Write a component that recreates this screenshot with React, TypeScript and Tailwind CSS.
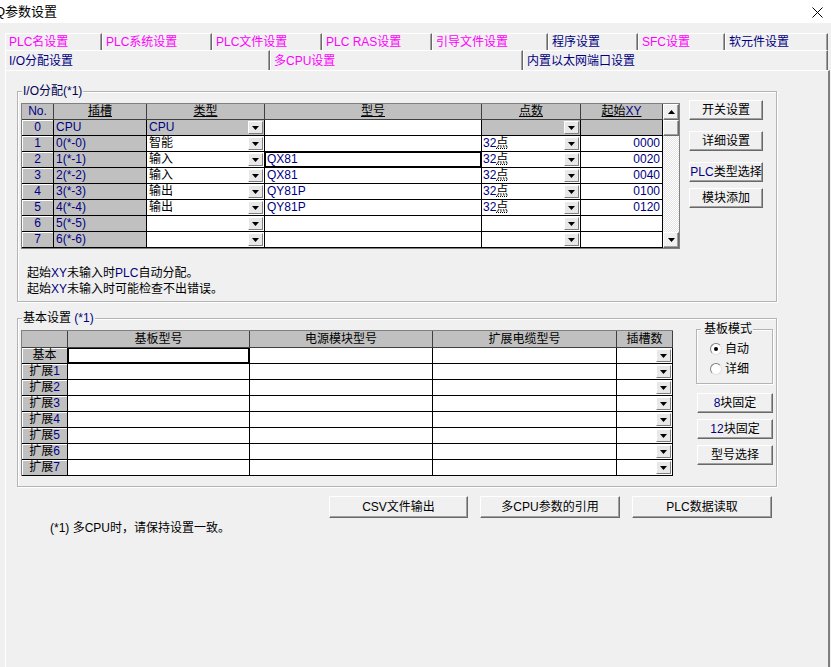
import type { ReactNode } from 'react'

type IoRow = {
  no: string
  slot: string
  type: string
  model: string
  points: string
  xy: string
  cpu?: boolean
  focus?: boolean
}

const ioRows: IoRow[] = [
  { no: '0', slot: 'CPU', type: 'CPU', model: '', points: '', xy: '', cpu: true },
  { no: '1', slot: '0(*-0)', type: '智能', model: '', points: '32点', xy: '0000' },
  { no: '2', slot: '1(*-1)', type: '输入', model: 'QX81', points: '32点', xy: '0020', focus: true },
  { no: '3', slot: '2(*-2)', type: '输入', model: 'QX81', points: '32点', xy: '0040' },
  { no: '4', slot: '3(*-3)', type: '输出', model: 'QY81P', points: '32点', xy: '0100' },
  { no: '5', slot: '4(*-4)', type: '输出', model: 'QY81P', points: '32点', xy: '0120' },
  { no: '6', slot: '5(*-5)', type: '', model: '', points: '', xy: '' },
  { no: '7', slot: '6(*-6)', type: '', model: '', points: '', xy: '' },
]

const baseRows = ['', '1', '2', '3', '4', '5', '6', '7']

const raised =
  'bg-[#f0f0f0] border border-t-white border-l-white border-r-[#696969] border-b-[#696969] shadow-[inset_-1px_-1px_0_#a0a0a0]'

function DropBtn() {
  return (
    <span className="mr-[1px] flex h-[13px] w-[15px] shrink-0 items-center justify-center border border-t-white border-l-white border-r-[#808080] border-b-[#808080] bg-[#e8e8e8]">
      <svg width="7" height="4" viewBox="0 0 7 4">
        <path d="M0 0h7L3.5 4z" fill="#000" />
      </svg>
    </span>
  )
}

function Button({ children, className = '' }: { children: ReactNode; className?: string }) {
  return (
    <div className={`flex items-center justify-center ${raised} ${className}`}>{children}</div>
  )
}

function Group({ label, className = '', children }: { label: ReactNode; className?: string; children: ReactNode }) {
  return (
    <div
      className={`relative border border-[#b4b4b4] shadow-[1px_1px_0_#fff,inset_1px_1px_0_#fff] ${className}`}
    >
      <span className="absolute -top-[9px] left-[4px] bg-[#f0f0f0] px-[1px] leading-[16px]">{label}</span>
      {children}
    </div>
  )
}

function Radio({ checked, label }: { checked?: boolean; label: string }) {
  return (
    <div className="flex h-[16px] items-center">
      <span className="flex h-[12px] w-[12px] items-center justify-center rounded-full border border-t-[#808080] border-l-[#808080] border-r-[#e0e0e0] border-b-[#e0e0e0] bg-white">
        {checked && <span className="h-[4px] w-[4px] rounded-full bg-black" />}
      </span>
      <span className="ml-[3px]">{label}</span>
    </div>
  )
}

function Tab({ children, className = '', navy }: { children: ReactNode; className?: string; navy?: boolean }) {
  return (
    <div
      className={`flex items-center border-t border-l border-t-white border-l-white border-r border-r-[#696969] pl-[3px] shadow-[inset_-1px_0_0_#a0a0a0] ${
        navy ? 'text-[#000080]' : 'text-[#ff00ff]'
      } ${className}`}
    >
      {children}
    </div>
  )
}

function IoTable() {
  return (
    <div className="flex border-t border-l border-b border-[#808080]">
      <div className="flex flex-col">
        <div className="flex h-[16px] bg-[#c0c0c0] text-[#000080]">
          <div className="w-[32px] border-r border-b border-[#404040] text-center leading-[15px]">No.</div>
          <div className="w-[93px] border-r border-b border-[#404040] text-center leading-[15px] text-black">
            <span className="underline underline-offset-1">插槽</span>
          </div>
          <div className="w-[118px] border-r border-b border-[#404040] text-center leading-[15px] text-black">
            <span className="underline underline-offset-1">类型</span>
          </div>
          <div className="w-[217px] border-r border-b border-[#404040] text-center leading-[15px] text-black">
            <span className="underline underline-offset-1">型号</span>
          </div>
          <div className="w-[99px] border-r border-b border-[#404040] text-center leading-[15px] text-black">
            <span className="underline underline-offset-1">点数</span>
          </div>
          <div className="w-[82px] border-r border-b border-[#404040] text-center leading-[15px] text-black">
            <span className="underline underline-offset-1">
              起始<span className="text-[#000080]">XY</span>
            </span>
          </div>
        </div>
        {ioRows.map((r) => (
          <div key={r.no} className="flex h-[16px] leading-[15px]">
            <div className="w-[32px] border-r border-b border-black bg-[#c0c0c0] text-center text-[#000080] shadow-[inset_1px_1px_0_#fff]">
              {r.no}
            </div>
            <div className="w-[93px] border-r border-b border-black bg-[#c0c0c0] pl-[2px] text-[#000080]">{r.slot}</div>
            <div
              className={`flex w-[118px] items-center justify-between border-r border-b border-black pl-[2px] ${
                r.cpu ? 'bg-[#c0c0c0] text-[#000080]' : 'bg-white'
              }`}
            >
              <span>{r.type}</span>
              <DropBtn />
            </div>
            <div
              className={`w-[217px] border-r border-b border-black bg-white pl-[2px] text-[#000080] ${
                r.focus ? 'shadow-[inset_0_0_0_1px_#000]' : ''
              }`}
            >
              {r.model}
            </div>
            <div
              className={`flex w-[99px] items-center justify-between border-r border-b border-black pl-[1px] text-[#000080] ${
                r.cpu ? 'bg-[#c0c0c0]' : 'bg-white'
              }`}
            >
              <span>
                {r.points && (
                  <>
                    32<span className="text-black underline decoration-dotted">点</span>
                  </>
                )}
              </span>
              <DropBtn />
            </div>
            <div
              className={`w-[82px] border-r border-b border-black pr-[2px] text-right text-[#000080] ${
                r.cpu ? 'bg-[#c0c0c0]' : 'bg-white'
              }`}
            >
              {r.xy}
            </div>
          </div>
        ))}
      </div>
      <div className="flex w-[17px] flex-col border-r border-[#808080]">
        <div className={`flex h-[16px] items-center justify-center ${raised}`}>
          <svg width="7" height="4" viewBox="0 0 7 4">
            <path d="M0 4h7L3.5 0z" fill="#000" />
          </svg>
        </div>
        <div className={`h-[16px] ${raised}`} />
        <div className="flex-1 bg-[#f6f6f6] bg-[image:repeating-conic-gradient(#ffffff_0%_25%,#e4e4e4_0%_50%)] bg-[length:2px_2px]" />
        <div className={`flex h-[16px] items-center justify-center ${raised}`}>
          <svg width="7" height="4" viewBox="0 0 7 4">
            <path d="M0 0h7L3.5 4z" fill="#000" />
          </svg>
        </div>
      </div>
    </div>
  )
}

function BaseTable() {
  return (
    <div className="flex flex-col border-t border-l border-[#808080]">
      <div className="flex h-[17px] bg-[#c0c0c0] leading-[16px]">
        <div className="w-[46px] border-r border-b border-[#404040]" />
        <div className="w-[182px] border-r border-b border-[#404040] text-center">基板型号</div>
        <div className="w-[183px] border-r border-b border-[#404040] text-center">电源模块型号</div>
        <div className="w-[184px] border-r border-b border-[#404040] text-center">扩展电缆型号</div>
        <div className="w-[56px] border-r border-b border-[#404040] text-center">插槽数</div>
      </div>
      {baseRows.map((n, i) => (
        <div key={i} className="flex h-[16px] leading-[15px]">
          <div className="w-[46px] border-r border-b border-black bg-[#c0c0c0] text-center shadow-[inset_1px_1px_0_#fff]">
            {n ? '扩展' : '基本'}
            {n && <span className="text-[#000080]">{n}</span>}
          </div>
          <div
            className={`w-[182px] border-r border-b border-black bg-white ${
              i === 0 ? 'shadow-[inset_0_0_0_1px_#000]' : ''
            }`}
          />
          <div className="w-[183px] border-r border-b border-black bg-white" />
          <div className="w-[184px] border-r border-b border-black bg-white" />
          <div className="flex w-[56px] items-center justify-end border-r border-b border-black bg-white">
            <DropBtn />
          </div>
        </div>
      ))}
    </div>
  )
}

export default function App() {
  return (
    <div className="flex h-[667px] w-[831px] flex-col overflow-hidden bg-[#f0f0f0] font-['Liberation_Sans','Noto_Sans_CJK_SC',sans-serif] text-[12px] leading-[16px] text-black">
      <div className="flex h-[23px] shrink-0 items-center justify-between bg-white">
        <span className="-ml-[5px] text-[13px]">Q参数设置</span>
        <svg width="11" height="11" viewBox="0 0 11 11" className="mr-[8px] mt-[2px]">
          <path d="M0.5 0.5l10 10M10.5 0.5l-10 10" stroke="#000" strokeWidth="1" />
        </svg>
      </div>

      <div className="mt-[10px] flex h-[17px] shrink-0 pl-[5px]">
        <Tab className="w-[97px]">PLC名设置</Tab>
        <Tab className="w-[110px]">PLC系统设置</Tab>
        <Tab className="w-[110px]">PLC文件设置</Tab>
        <Tab className="w-[110px]">PLC RAS设置</Tab>
        <Tab className="w-[116px]">引导文件设置</Tab>
        <Tab className="w-[90px]" navy>
          程序设置
        </Tab>
        <Tab className="w-[87px]">SFC设置</Tab>
        <Tab className="w-[103px]" navy>
          软元件设置
        </Tab>
      </div>
      <div className="flex h-[20px] shrink-0 pl-[5px]">
        <Tab className="w-[265px]" navy>
          I/O分配设置
        </Tab>
        <Tab className="w-[253px]">多CPU设置</Tab>
        <Tab className="w-[305px]" navy>
          内置以太网端口设置
        </Tab>
      </div>

      <div className="ml-[5px] flex w-[825px] flex-1 flex-col border-t border-l border-t-white border-l-white border-r-2 border-r-[#808080]">
        <Group
          className="ml-[11px] mt-[20px] w-[760px] pb-[4px] pl-[3px] pt-[8px]"
          label={<span className="text-[#000050]">I/O分配(*1)</span>}
        >
          <div className="flex items-start">
            <div className="mt-[3px]">
              <IoTable />
            </div>
            <div className="ml-[9px] flex w-[74px] flex-col">
              <Button className="h-[20px]">开关设置</Button>
              <Button className="mt-[11px] h-[20px]">详细设置</Button>
              <Button className="mt-[11px] h-[20px]">
                <span className="text-[#000080]">PLC</span>类型选择
              </Button>
              <Button className="mt-[6px] h-[20px]">模块添加</Button>
            </div>
          </div>
          <div className="ml-[6px] mt-[16px]">
            <div>
              起始<span className="text-[#000080]">XY</span>未输入时<span className="text-[#000080]">PLC</span>
              自动分配。
            </div>
            <div>
              起始<span className="text-[#000080]">XY</span>未输入时可能检查不出错误。
            </div>
          </div>
        </Group>

        <Group
          className="ml-[11px] mt-[16px] w-[760px] pb-[10px] pl-[3px] pt-[10px]"
          label={
            <>
              基本设置 <span className="text-[#000080]">(*1)</span>
            </>
          }
        >
          <div className="flex items-start">
            <div className="mt-[1px]">
              <BaseTable />
            </div>
            <div className="ml-[23px] flex flex-col">
              <Group className="h-[55px] w-[77px] pl-[13px] pt-[11px]" label={<span className="ml-[2px]">基板模式</span>}>
                <Radio checked label="自动" />
                <div className="mt-[4px]">
                  <Radio label="详细" />
                </div>
              </Group>
              <Button className="ml-[1px] mt-[9px] h-[20px] w-[76px]">
                <span className="text-[#000080]">8</span>块固定
              </Button>
              <Button className="ml-[1px] mt-[6px] h-[20px] w-[76px]">
                <span className="text-[#000080]">12</span>块固定
              </Button>
              <Button className="ml-[1px] mt-[6px] h-[20px] w-[76px]">型号选择</Button>
            </div>
          </div>
        </Group>

        <div className="ml-[323px] mt-[9px] flex gap-[12px]">
          <Button className="h-[22px] w-[139px]">CSV文件输出</Button>
          <Button className="h-[22px] w-[140px]">多CPU参数的引用</Button>
          <Button className="h-[22px] w-[140px]">PLC数据读取</Button>
        </div>
        <div className="ml-[44px] mt-[2px]">(*1) 多CPU时，请保持设置一致。</div>
      </div>
    </div>
  )
}
